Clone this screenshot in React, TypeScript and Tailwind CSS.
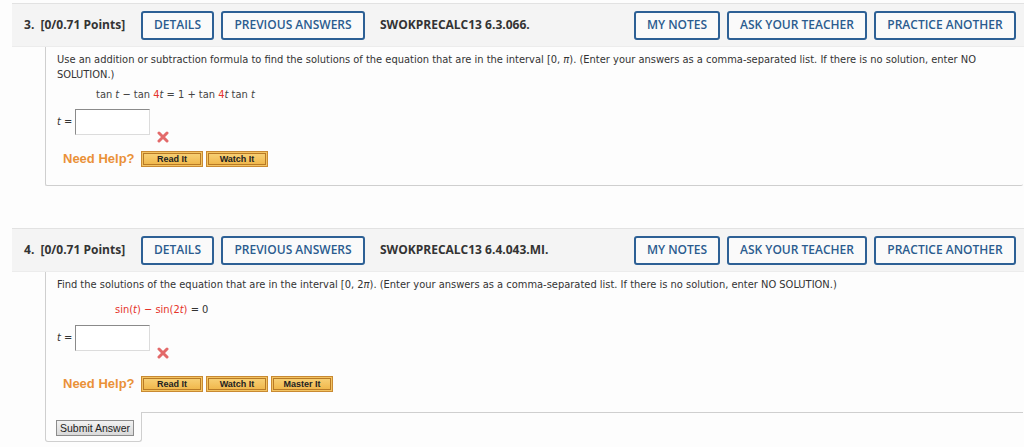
import React from 'react';

const headFont = { fontFamily: '"Open Sans", "Liberation Sans", sans-serif' };
const bodyFont = { fontFamily: '"DejaVu Sans Condensed", "DejaVu Sans", sans-serif' };
const arial = { fontFamily: '"Liberation Sans", Arial, sans-serif' };

function HeadButton({ label, width }: { label: string; width: string }) {
  return (
    <button
      className={`${width} h-[29px] rounded-[3px] border-2 border-[#2d6095] bg-[#fafafa] text-[12px] leading-[16px] font-semibold text-[#2b5c8f] flex items-center justify-center`}
      style={headFont}
    >
      {label}
    </button>
  );
}

function QuestionHeader({ num, code }: { num: number; code: string }) {
  return (
    <div className="h-[44px] border-t border-[#e2e2e2] border-b border-b-[#ececec] bg-[#f4f4f4] flex items-center pl-[12px] pr-[8px]" style={headFont}>
      <span className="text-[12px] leading-[16px] font-bold text-[#333] w-[117px]">{num}.&nbsp; [0/0.71 Points]</span>
      <div className="flex gap-[7px]">
        <HeadButton label="DETAILS" width="w-[73px]" />
        <HeadButton label="PREVIOUS ANSWERS" width="w-[144px]" />
      </div>
      <span className="ml-[15px] text-[12px] leading-[16px] font-bold text-[#333]">{code}</span>
      <div className="flex-1" />
      <div className="flex gap-[7px]">
        <HeadButton label="MY NOTES" width="w-[86px]" />
        <HeadButton label="ASK YOUR TEACHER" width="w-[140px]" />
        <HeadButton label="PRACTICE ANOTHER" width="w-[142px]" />
      </div>
    </div>
  );
}

function RedX() {
  return (
    <svg width="12" height="12" viewBox="0 0 12 12" className="ml-[7px] mt-[22px]">
      <path d="M2 2 L10 10 M10 2 L2 10" stroke="#e36a6a" strokeWidth="3" strokeLinecap="round" />
    </svg>
  );
}

function AnswerRow() {
  return (
    <div className="flex items-start h-[34px]">
      <div className="flex items-center h-[26px] text-[11px] text-[#333]" style={bodyFont}>
        <i>t</i>&nbsp;=
      </div>
      <input className="ml-[3px] w-[75px] h-[26px] border border-t-[#8a8a8a] border-l-[#8a8a8a] border-r-[#dcdcdc] border-b-[#dcdcdc] bg-white outline-none" />
      <RedX />
    </div>
  );
}

function HelpButton({ label }: { label: string }) {
  return (
    <div className="w-[62px] h-[16px] border border-[#c98a32] bg-[#f3c463] p-[1px]">
      <div className="h-full border border-[#b87a26] bg-gradient-to-b from-[#f7cf73] to-[#f0b84c] flex items-center justify-center text-[9px] leading-[10px] font-bold text-[#222]" style={arial}>
        {label}
      </div>
    </div>
  );
}

function NeedHelp({ buttons }: { buttons: string[] }) {
  return (
    <div className="flex items-center h-[16px] pl-[6px]">
      <span className="w-[78px] text-[13px] leading-[16px] font-bold text-[#ea9138]" style={arial}>Need Help?</span>
      <div className="flex gap-[3px]">
        {buttons.map((b) => (
          <HelpButton key={b} label={b} />
        ))}
      </div>
    </div>
  );
}

export default function App() {
  return (
    <div className="w-[1024px] h-[447px] bg-[#fdfdfd] pt-[3px] overflow-hidden">
      {/* question 3 */}
      <div className="ml-[12px]">
        <QuestionHeader num={3} code="SWOKPRECALC13 6.3.066." />
        <div className="ml-[33px] mr-[1px] border-l border-b border-[#cfcfcf] rounded-bl-[2px] rounded-br-[2px] pl-[11px] pt-[5px] pb-[18px]">
          <p className="text-[11px] leading-[15px] text-[#333]" style={bodyFont}>
            Use an addition or subtraction formula to find the solutions of the equation that are in the interval [0, <i>π</i>). (Enter your answers as a comma-separated list. If there is no solution, enter NO
            <br />
            SOLUTION.)
          </p>
          <p className="mt-[5px] pl-[39px] text-[11px] leading-[15px] text-[#444]" style={bodyFont}>
            tan <i>t</i> − tan <span className="text-[#e5332a]">4</span><i>t</i> = 1 + tan <span className="text-[#e5332a]">4</span><i>t</i> tan <i>t</i>
          </p>
          <div className="mt-[7px]">
            <AnswerRow />
          </div>
          <div className="mt-[8px]">
            <NeedHelp buttons={['Read It', 'Watch It']} />
          </div>
        </div>
      </div>

      {/* question 4 */}
      <div className="ml-[12px] mt-[42px]">
        <QuestionHeader num={4} code="SWOKPRECALC13 6.4.043.MI." />
        <div className="ml-[33px] mr-[1px]">
          <div className="border-l border-[#cfcfcf] pl-[11px] pt-[5px] pb-[20px]">
            <p className="text-[11px] leading-[15px] text-[#333]" style={bodyFont}>
              Find the solutions of the equation that are in the interval [0, 2<i>π</i>). (Enter your answers as a comma-separated list. If there is no solution, enter NO SOLUTION.)
            </p>
            <p className="mt-[10px] pl-[58px] text-[11px] leading-[15px] text-[#333]" style={bodyFont}>
              <span className="text-[#e5332a]">sin(<i>t</i>) − sin(2<i>t</i>)</span> = 0
            </p>
            <div className="mt-[8px]">
              <AnswerRow />
            </div>
            <div className="mt-[17px]">
              <NeedHelp buttons={['Read It', 'Watch It', 'Master It']} />
            </div>
          </div>
          <div className="flex">
            <div className="w-[97px] h-[30px] border-l border-r border-b border-[#cfcfcf] rounded-b-[3px] pl-[10px] pt-[8px] flex items-start">
              <button className="h-[16px] px-[3px] border border-[#8c8c8c] bg-gradient-to-b from-[#f2f2f2] to-[#d9d9d9] text-[10.5px] leading-[14px] text-[#222]" style={arial}>
                Submit Answer
              </button>
            </div>
            <div className="flex-1 border-t border-[#cfcfcf] -ml-px" />
          </div>
        </div>
      </div>
    </div>
  );
}
